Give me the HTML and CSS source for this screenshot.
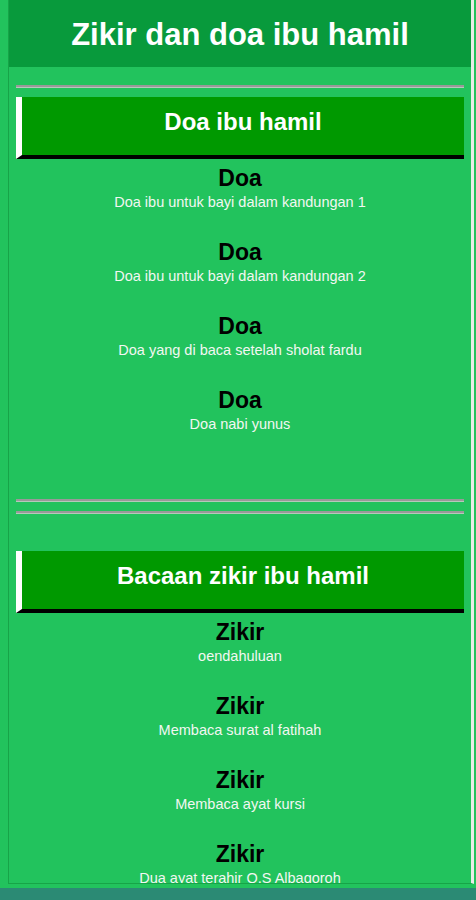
FILE: index.html
```html
<!DOCTYPE html>
<html lang="id">
<head>
    <meta charset="UTF-8">
    <title>Zikir dan doa ibu hamil</title>
    <link rel="stylesheet" href="styles.css">
</head>
<body>
    <div class="app">
        <div class="topbar">Zikir dan doa ibu hamil</div>
        <div class="content">
            <hr class="divider divider-top">
            <div class="section-title">Doa ibu hamil</div>
            <div class="item-list">
                <div class="item">
                    <div class="item-title">Doa</div>
                    <div class="item-sub">Doa ibu untuk bayi dalam kandungan 1</div>
                </div>
                <div class="item">
                    <div class="item-title">Doa</div>
                    <div class="item-sub">Doa ibu untuk bayi dalam kandungan 2</div>
                </div>
                <div class="item">
                    <div class="item-title">Doa</div>
                    <div class="item-sub">Doa yang di baca setelah sholat fardu</div>
                </div>
                <div class="item">
                    <div class="item-title">Doa</div>
                    <div class="item-sub">Doa nabi yunus</div>
                </div>
            </div>

            <hr class="divider divider-first">
            <hr class="divider divider-second">

            <div class="section-title">Bacaan zikir ibu hamil</div>
            <div class="item-list">
                <div class="item">
                    <div class="item-title">Zikir</div>
                    <div class="item-sub">oendahuluan</div>
                </div>
                <div class="item">
                    <div class="item-title">Zikir</div>
                    <div class="item-sub">Membaca surat al fatihah</div>
                </div>
                <div class="item">
                    <div class="item-title">Zikir</div>
                    <div class="item-sub">Membaca ayat kursi</div>
                </div>
                <div class="item">
                    <div class="item-title">Zikir</div>
                    <div class="item-sub">Dua ayat terahir Q.S Albaqoroh</div>
                </div>
            </div>
        </div>
    </div>
    <div class="bottom-bar"></div>
</body>
</html>
```

FILE: styles.css
```css
/* Page */
body {
    margin: 0;
    background-color: #22c35d;
    font-family: "Liberation Sans", Arial, sans-serif;
    overflow: hidden;
}

.app {
    margin-left: 8px;
    width: 462px;
    height: 883px;
    overflow: hidden;
    border-left: 1px solid #17a448;
    border-right: 3px solid #e8ece8;
    border-bottom: 1px solid #17a448;
}

.topbar {
    height: 64px;
    padding-top: 3px;
    line-height: 64px;
    background-color: #089a3c;
    color: #fff;
    font-size: 31px;
    font-weight: bold;
    text-align: center;
}

.content {
    padding: 0 7px;
}

/* Dividers */
.divider {
    height: 0;
    margin: 0;
    border: 0;
    border-top: 2px solid #999999;
    border-bottom: 1px solid #b5c9bb;
}

.divider-top {
    margin-top: 18px;
    margin-bottom: 9px;
}

.divider-first {
    margin-top: 67px;
}

.divider-second {
    margin-top: 9px;
    margin-bottom: 37px;
}

/* Section headers */
.section-title {
    height: 50px;
    padding-bottom: 8px;
    line-height: 50px;
    background-color: #009900;
    border-left: 6px solid #fff;
    border-bottom: 4px solid #000;
    color: #fff;
    font-size: 24px;
    font-weight: bold;
    text-align: center;
}

/* Items */
.item-list {
    display: flex;
    flex-direction: column;
    gap: 29px;
    padding-top: 6px;
}

.item {
    text-align: center;
}

.item-title {
    line-height: 26px;
    font-size: 23px;
    font-weight: bold;
    color: #000;
}

.item-sub {
    margin-top: 3px;
    line-height: 16px;
    font-size: 14.5px;
    color: #f2f7f2;
}

.bottom-bar {
    height: 12px;
    margin-top: 4px;
    background-color: #2b8a74;
}
```
